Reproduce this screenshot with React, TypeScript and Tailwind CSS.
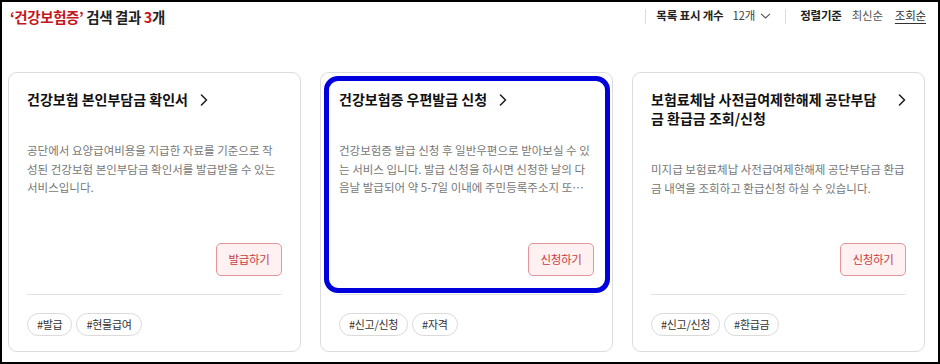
import React from "react";

type Card = {
  title: string;
  desc: string;
  button: string;
  tags: string[];
  highlight?: boolean;
};

const cards: Card[] = [
  {
    title: "건강보험 본인부담금 확인서",
    desc: "공단에서 요양급여비용을 지급한 자료를 기준으로 작성된 건강보험 본인부담금 확인서를 발급받을 수 있는 서비스입니다.",
    button: "발급하기",
    tags: ["#발급", "#현물급여"],
  },
  {
    title: "건강보험증 우편발급 신청",
    desc: "건강보험증 발급 신청 후 일반우편으로 받아보실 수 있는 서비스 입니다. 발급 신청을 하시면 신청한 날의 다음날 발급되어 약 5-7일 이내에 주민등록주소지 또는 거소지로 우편 발송됩니다.",
    button: "신청하기",
    tags: ["#신고/신청", "#자격"],
    highlight: true,
  },
  {
    title: "보험료체납 사전급여제한해제 공단부담금 환급금 조회/신청",
    desc: "미지급 보험료체납 사전급여제한해제 공단부담금 환급금 내역을 조회하고 환급신청 하실 수 있습니다.",
    button: "신청하기",
    tags: ["#신고/신청", "#환급금"],
  },
];

function Chevron() {
  return (
    <svg width="8" height="12" viewBox="0 0 8 12" className="shrink-0 mt-[4px] ml-3" fill="none">
      <polyline points="1.5,1 6.5,6 1.5,11" stroke="#222" strokeWidth="1.6" strokeLinecap="round" strokeLinejoin="round" />
    </svg>
  );
}

function CardView({ c }: { c: Card }) {
  return (
    <div className="relative flex flex-col h-[280px] rounded-[9px] border border-[#dcdcdc] bg-white pt-[17px] px-[18px] pb-[15px]">
      <div className="flex items-start">
        <div className="min-w-0 text-[14px] leading-[19px] font-bold text-[#111]">{c.title}</div>
        <Chevron />
      </div>
      <p className="mt-[32px] text-[11.5px] leading-[18.5px] text-[#777] line-clamp-3 break-all">{c.desc}</p>
      <div className="flex-1" />
      <div className="flex justify-end">
        <button className="h-[33px] w-[66px] rounded-[5px] border border-[#e3959c] bg-[#fff1f1] text-[11.5px] text-[#c93a45] tracking-[-0.3px]">
          {c.button}
        </button>
      </div>
      <div className="mt-[18px] h-px bg-[#e2e2e2]" />
      <div className="mt-[18px] flex gap-[4px]">
        {c.tags.map((t) => (
          <span
            key={t}
            className="h-[23px] px-[9px] flex items-center rounded-full border border-[#dadada] text-[11px] text-[#333] tracking-[-0.3px]"
          >
            {t}
          </span>
        ))}
      </div>
      {c.highlight && (
        <div className="absolute left-[3px] top-[3px] w-[286px] h-[217px] rounded-[14px] border-[5px] border-[#0000dc] pointer-events-none" />
      )}
    </div>
  );
}

export default function App() {
  return (
    <div
      className="w-[940px] h-[364px] border-2 border-black bg-white overflow-hidden"
      style={{ fontFamily: "'Noto Sans CJK KR', 'Noto Sans', sans-serif" }}
    >
      <div className="flex items-center justify-between h-[30px] pl-[8px] pr-[12px]">
        <div className="text-[14.5px] font-bold text-[#222] tracking-[-0.4px]">
          <span className="text-[#c4161c]">‘건강보험증’</span> 검색 결과 <span className="text-[#c4161c]">3</span>개
        </div>
        <div className="flex items-center text-[11.5px] text-[#333] tracking-[-0.2px] -mt-[2px]">
          <div className="w-px h-[15px] bg-[#dcdcdc] mr-[10px]" />
          <span className="font-bold text-[#222]">목록 표시 개수</span>
          <span className="ml-[9px] text-[#444]">12개</span>
          <svg width="11" height="6" viewBox="0 0 11 6" className="ml-[5px]" fill="none">
            <polyline points="1,0.8 5.5,5 10,0.8" stroke="#555" strokeWidth="1.1" />
          </svg>
          <div className="w-px h-[15px] bg-[#dcdcdc] mx-[14px]" />
          <span className="font-bold text-[#222]">정렬기준</span>
          <span className="ml-[10px] text-[#555]">최신순</span>
          <span className="ml-[12px] text-[#333] underline underline-offset-[3px]">조회순</span>
        </div>
      </div>
      <div className="mt-[40px] pl-[6px] grid grid-cols-[293px_293px_293px] gap-[19px]">
        {cards.map((c) => (
          <CardView key={c.title} c={c} />
        ))}
      </div>
    </div>
  );
}
